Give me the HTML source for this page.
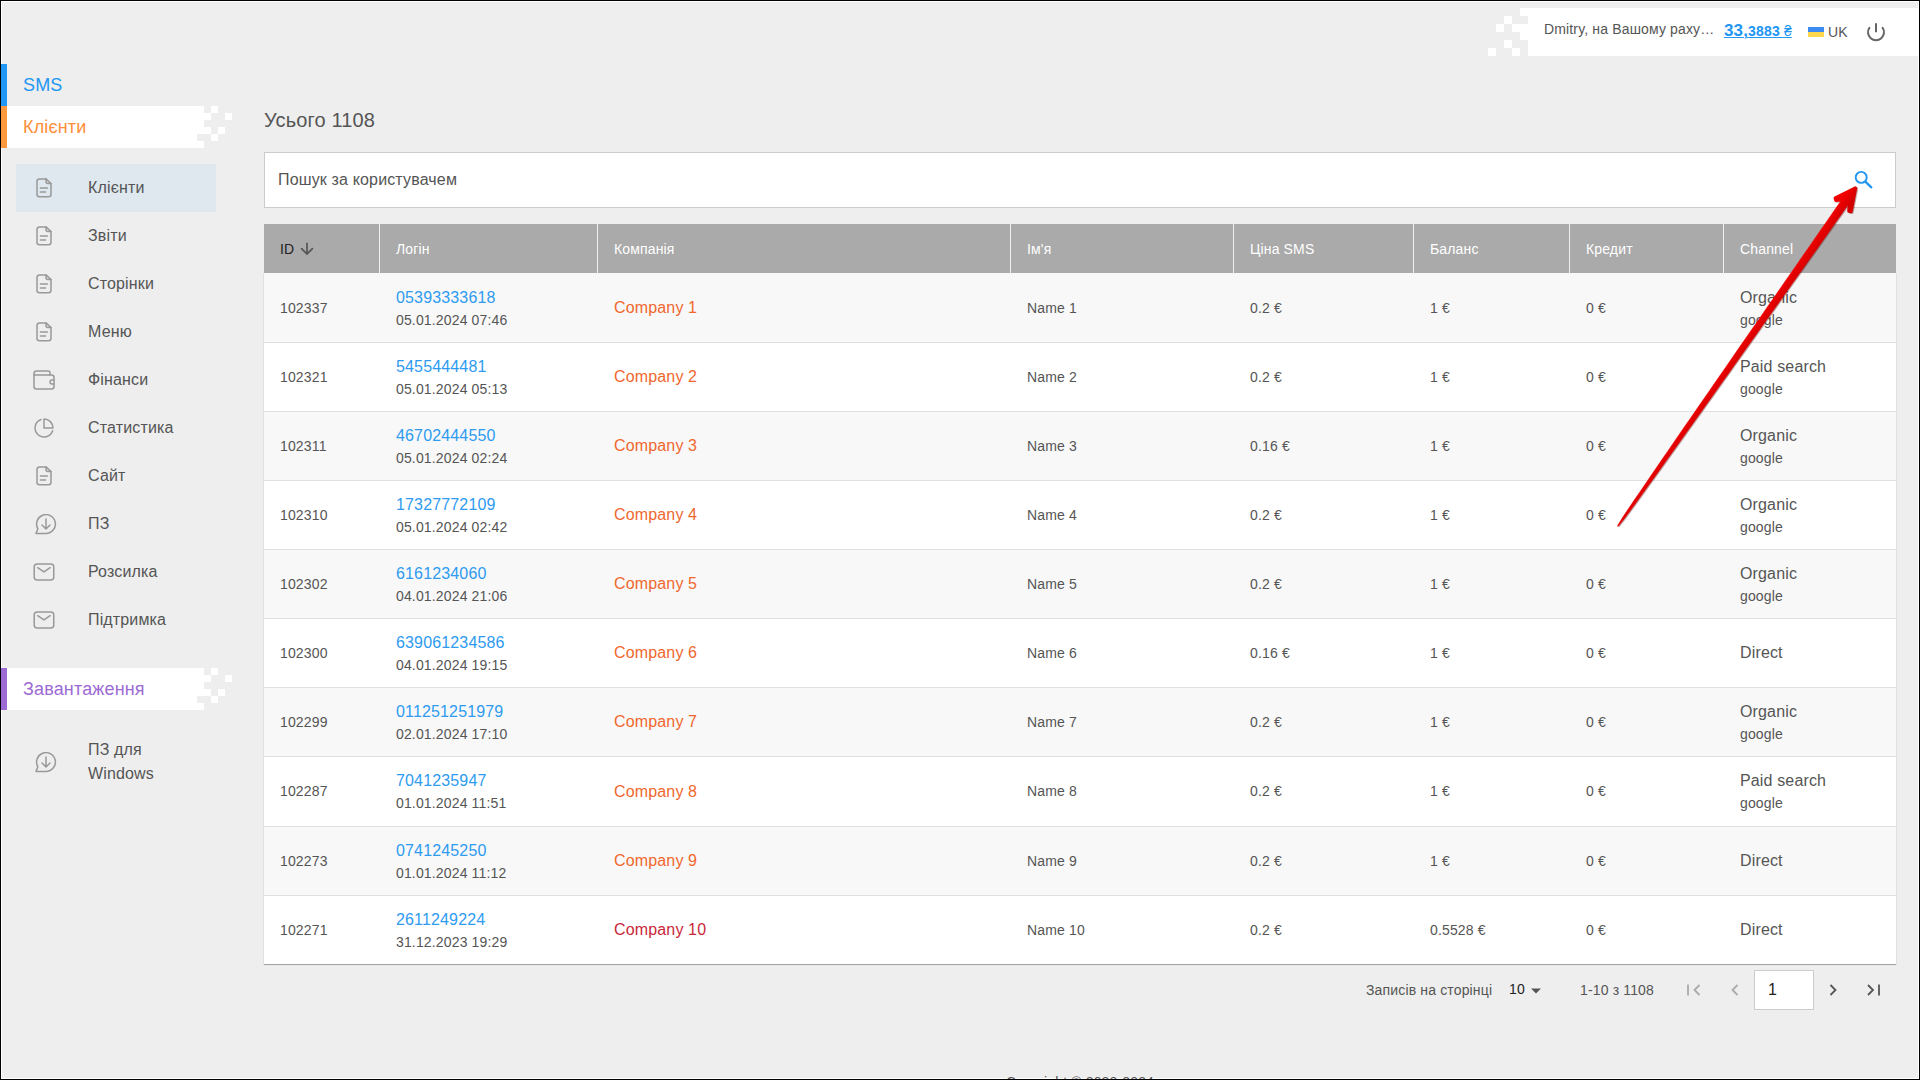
<!DOCTYPE html>
<html lang="uk">
<head>
<meta charset="utf-8">
<title>Клієнти</title>
<style>
*{box-sizing:border-box;margin:0;padding:0}
html,body{width:1920px;height:1080px;overflow:hidden}
body{background:#eeeeee;font-family:"Liberation Sans",sans-serif;color:#555;position:relative;letter-spacing:0.15px}
.abs{position:absolute}
.frame-w{position:absolute;left:1px;top:1px;width:1918px;height:1078px;border:1px solid #fff;z-index:0}
.frame-b{position:absolute;left:0;top:0;width:1920px;height:1080px;border:1px solid #000;z-index:100;pointer-events:none}
/* top bar */
.topbar{position:absolute;left:1480px;top:8px;width:439px;height:48px;z-index:2}
.topbar .panel{position:absolute;left:48px;top:0;right:0;height:48px;background:#fff}
.topbar .txt{position:absolute;left:64px;top:-3px;height:48px;line-height:48px;font-size:14px;color:#555;white-space:nowrap}
/* sidebar */
.sec{position:absolute;left:1px;width:240px;height:42px;z-index:2}
.sec .bar{position:absolute;left:0;top:0;width:6px;height:42px}
.sec .lbl{position:absolute;left:22px;top:0;line-height:42px;font-size:18px;white-space:nowrap}
.sec svg{position:absolute;left:6px;top:0}
.nav{position:absolute;left:16px;width:200px;height:48px;z-index:2}
.nav.on{background:#dee8ee}
.nav .t{position:absolute;left:72px;top:0;line-height:48px;font-size:16px;color:#555;white-space:nowrap}
.nav svg{position:absolute;fill:none;stroke:#999;stroke-width:1.5;stroke-linecap:round;stroke-linejoin:round}
/* main */
.title{position:absolute;left:264px;top:106px;font-size:20px;line-height:28px;color:#555}
.search{position:absolute;left:264px;top:152px;width:1632px;height:56px;background:#fff;border:1px solid #ccc}
.search .ph{position:absolute;left:13px;top:0;line-height:54px;font-size:16px;color:#555}

.tbl{position:absolute;left:264px;top:224px;width:1632px;height:740px;z-index:2}
.thead{position:absolute;left:0;top:0;width:1632px;height:49px;background:#aaa}
.th{position:absolute;top:1px;height:49px;line-height:49px;padding-left:16px;font-size:14px;color:#fff;white-space:nowrap}
.sep{position:absolute;top:0;width:1px;height:49px;background:#efefef}
.tbody{position:absolute;left:0;top:49px;width:1632px;height:692px;box-shadow:-1px 0 0 #e0e0e0,1px 0 0 #e0e0e0,0 1px 0 #e8e8e8}
.row{position:absolute;left:0;width:1632px;background:#fff;border-bottom:1px solid #e0e0e0}
.row.odd{background:#f8f8f8}
.row .cell{top:0}
.row.first .cell{top:1px}
.row.last{border-bottom:1px solid #a3a3a3}
.cell{position:absolute;top:1px;height:100%;padding-left:16px;display:flex;align-items:center}
.c1{font-size:14px;line-height:21px;color:#555;white-space:nowrap}
.c1.big{font-size:16px;line-height:24px}
.comp{color:#f0672e}
.comp.red{color:#c8283a}
.c2 .l1{font-size:16px;line-height:24px;color:#555;white-space:nowrap}
.c2 .l2{font-size:14px;line-height:21px;color:#555;white-space:nowrap}
.lnk{color:#2e9bf0 !important}

.bal{position:absolute;left:1724px;top:0;height:48px;color:#2196f3;white-space:nowrap;font-weight:bold;text-decoration:underline;text-underline-offset:2px}
.flag{position:absolute;left:1807px;top:26px;width:16px;height:11px}
.uk{position:absolute;left:1828px;top:0;line-height:48px;font-size:14px;color:#555}
.pager{position:absolute;left:0;top:0;z-index:2}
.pg-t{position:absolute;font-size:14px;line-height:20px;color:#555;white-space:nowrap}
.pgbox{position:absolute;left:1754px;top:970px;width:60px;height:40px;background:#fff;border:1px solid #ccc}
.copy{position:absolute;left:0;width:2160px;top:1072px;text-align:center;font-size:14px;line-height:20px;color:#555;z-index:2}
.arrow{position:absolute;left:0;top:0;z-index:50;pointer-events:none}
</style>
</head>
<body>
<div class="frame-w"></div>

<!-- TOP BAR -->
<div class="topbar">
  <svg class="abs" style="left:0;top:0" width="48" height="48" viewBox="0 0 48 48" shape-rendering="crispEdges">
    <rect x="40" y="0" width="8" height="8" fill="#fff"/>
    <rect x="24" y="8" width="8" height="8" fill="#fff"/>
    <rect x="16" y="16" width="8" height="8" fill="#fff"/>
    <rect x="32" y="16" width="16" height="8" fill="#fff"/>
    <rect x="40" y="24" width="8" height="8" fill="#fff"/>
    <rect x="24" y="32" width="8" height="8" fill="#fff"/>
    <rect x="8" y="40" width="8" height="8" fill="#fff"/>
    <rect x="32" y="40" width="8" height="8" fill="#fff"/>
  </svg>
  <div class="panel"></div>
  <div class="txt">Dmitry, на Вашому раху…</div>
  <div class="bal" style="left:244px;top:-1px;text-decoration:underline;text-decoration-thickness:1px;text-underline-offset:1px"><span style="font-size:17px;line-height:48px">33,</span><span style="font-size:14px;line-height:48px">3883 <span style="font-weight:normal">₴</span></span></div>
  <div class="flag" style="left:328px;top:19px;height:10px"><div style="height:5px;background:#3d8bf0"></div><div style="height:5px;background:#ffd84d"></div></div>
  <div class="uk" style="left:348px">UK</div>
  <svg class="abs" style="left:385px;top:12.5px" width="22" height="22" viewBox="0 0 22 22" fill="none" stroke="#666" stroke-width="2" stroke-linecap="round"><path d="M4.4 6.7A8 8 0 1 0 17.6 6.7"/><path d="M11 2.3V11.2" stroke-linecap="butt"/></svg>
</div>

<!-- SIDEBAR -->
<div class="sec" style="top:64px"><div class="bar" style="background:#2196f3"></div><div class="lbl" style="color:#2196f3">SMS</div></div>
<div class="sec" style="top:106px">
  <svg width="226" height="42" viewBox="0 0 226 42" shape-rendering="crispEdges">
    <path fill="#fff" d="M0 0H197V7H0Z M0 7H204V14H0Z M0 14H197V21H0Z M0 21H204V28H0Z M0 28H190V35H0Z M0 35H197V42H0Z"/>
    <rect x="204" y="0" width="7" height="7" fill="#fff"/>
    <rect x="218" y="7" width="7" height="7" fill="#fff"/>
    <rect x="211" y="21" width="7" height="7" fill="#fff"/>
    <rect x="204" y="28" width="7" height="7" fill="#fff"/>
  </svg>
  <div class="bar" style="background:#ff993d"></div><div class="lbl" style="color:#ff8f3a">Клієнти</div>
</div>

<div class="nav on" style="top:164px"><svg width="16" height="20" viewBox="0 0 16 20" style="left:20px;top:14px"><path d="M3.5 0.9H10L15 5.6V16.3Q15 18.8 12.5 18.8H3.5Q1 18.8 1 16.3V3.4Q1 0.9 3.5 0.9Z"/><path d="M10 0.9V3.6Q10 5.6 12 5.6H15"/><path d="M4.4 10H11.4M4.4 13.9H9.6"/></svg><div class="t">Клієнти</div></div>
<div class="nav" style="top:212px"><svg width="16" height="20" viewBox="0 0 16 20" style="left:20px;top:14px"><path d="M3.5 0.9H10L15 5.6V16.3Q15 18.8 12.5 18.8H3.5Q1 18.8 1 16.3V3.4Q1 0.9 3.5 0.9Z"/><path d="M10 0.9V3.6Q10 5.6 12 5.6H15"/><path d="M4.4 10H11.4M4.4 13.9H9.6"/></svg><div class="t">Звіти</div></div>
<div class="nav" style="top:260px"><svg width="16" height="20" viewBox="0 0 16 20" style="left:20px;top:14px"><path d="M3.5 0.9H10L15 5.6V16.3Q15 18.8 12.5 18.8H3.5Q1 18.8 1 16.3V3.4Q1 0.9 3.5 0.9Z"/><path d="M10 0.9V3.6Q10 5.6 12 5.6H15"/><path d="M4.4 10H11.4M4.4 13.9H9.6"/></svg><div class="t">Сторінки</div></div>
<div class="nav" style="top:308px"><svg width="16" height="20" viewBox="0 0 16 20" style="left:20px;top:14px"><path d="M3.5 0.9H10L15 5.6V16.3Q15 18.8 12.5 18.8H3.5Q1 18.8 1 16.3V3.4Q1 0.9 3.5 0.9Z"/><path d="M10 0.9V3.6Q10 5.6 12 5.6H15"/><path d="M4.4 10H11.4M4.4 13.9H9.6"/></svg><div class="t">Меню</div></div>
<div class="nav" style="top:356px"><svg width="22" height="22" viewBox="0 0 22 22" style="left:17px;top:13px"><path d="M1 6V17.5Q1 20 3.5 20H18.5Q21 20 21 17.5V8.5Q21 6 18.5 6H1"/><path d="M1 6V4.5Q1 2 3.5 2H15Q17 2 17 4V6"/><path d="M21 11H19A2 2 0 0 0 19 15H21"/></svg><div class="t">Фінанси</div></div>
<div class="nav" style="top:404px"><svg width="20" height="20" viewBox="0 0 20 20" style="left:18px;top:14px"><path d="M7 1.5A9 9 0 1 0 18.6 12.7"/><path d="M10 1V10H19A9 9 0 0 0 10 1Z"/></svg><div class="t">Статистика</div></div>
<div class="nav" style="top:452px"><svg width="16" height="20" viewBox="0 0 16 20" style="left:20px;top:14px"><path d="M3.5 0.9H10L15 5.6V16.3Q15 18.8 12.5 18.8H3.5Q1 18.8 1 16.3V3.4Q1 0.9 3.5 0.9Z"/><path d="M10 0.9V3.6Q10 5.6 12 5.6H15"/><path d="M4.4 10H11.4M4.4 13.9H9.6"/></svg><div class="t">Сайт</div></div>
<div class="nav" style="top:500px"><svg width="22" height="22" viewBox="0 0 22 22" style="left:19px;top:14px"><path d="M11 19.4H1L2.9 14.8A9.4 9.4 0 1 1 11 19.4Z"/><path d="M11 5V14.5M7 11L11 15L15 11"/></svg><div class="t">ПЗ</div></div>
<div class="nav" style="top:548px"><svg width="22" height="20" viewBox="0 0 22 20" style="left:17px;top:14px"><rect x="1.2" y="1.9" width="19.55" height="16" rx="3"/><path d="M4.6 5.7L11 9.9L17.1 5.6"/></svg><div class="t">Розсилка</div></div>
<div class="nav" style="top:596px"><svg width="22" height="20" viewBox="0 0 22 20" style="left:17px;top:14px"><rect x="1.2" y="1.9" width="19.55" height="16" rx="3"/><path d="M4.6 5.7L11 9.9L17.1 5.6"/></svg><div class="t">Підтримка</div></div>
<div class="sec" style="top:668px">
  <svg width="226" height="42" viewBox="0 0 226 42" shape-rendering="crispEdges">
    <path fill="#fff" d="M0 0H197V7H0Z M0 7H204V14H0Z M0 14H197V21H0Z M0 21H204V28H0Z M0 28H190V35H0Z M0 35H197V42H0Z"/>
    <rect x="204" y="0" width="7" height="7" fill="#fff"/>
    <rect x="218" y="7" width="7" height="7" fill="#fff"/>
    <rect x="211" y="21" width="7" height="7" fill="#fff"/>
    <rect x="204" y="28" width="7" height="7" fill="#fff"/>
  </svg>
  <div class="bar" style="background:#9c6bd3"></div><div class="lbl" style="color:#9c6bd3">Завантаження</div>
</div>
<div class="nav" style="top:738px;height:48px"><svg width="22" height="22" viewBox="0 0 22 22" style="left:19px;top:14px"><path d="M11 19.4H1L2.9 14.8A9.4 9.4 0 1 1 11 19.4Z"/><path d="M11 5V14.5M7 11L11 15L15 11"/></svg><div class="t" style="line-height:24px">ПЗ для<br>Windows</div></div>

<!-- MAIN -->
<div class="title">Усього 1108</div>
<div class="search"><div class="ph">Пошук за користувачем</div><svg class="abs" style="left:1586px;top:14px" width="24" height="24" viewBox="0 0 24 24" fill="none" stroke="#2196f3" stroke-width="1.9" stroke-linecap="round"><circle cx="10.2" cy="10.4" r="5.5"/><path d="M14.6 14.8L20.3 20.3" stroke-width="2.3"/></svg></div>


<div class="tbl">
 <div class="thead">
  <div class="th" style="left:0;color:#222">ID<svg width="16" height="16" viewBox="0 0 16 16" style="position:absolute;left:35px;top:15px" fill="none" stroke="#555" stroke-width="1.7" stroke-linecap="round"><path d="M8 3.4V14M2.6 8.7L8 14.1L13.4 8.7"/></svg></div>
  <div class="sep" style="left:115px"></div><div class="th" style="left:116px">Логін</div>
  <div class="sep" style="left:333px"></div><div class="th" style="left:334px">Компанія</div>
  <div class="sep" style="left:746px"></div><div class="th" style="left:747px">Ім'я</div>
  <div class="sep" style="left:969px"></div><div class="th" style="left:970px">Ціна SMS</div>
  <div class="sep" style="left:1149px"></div><div class="th" style="left:1150px">Баланс</div>
  <div class="sep" style="left:1305px"></div><div class="th" style="left:1306px">Кредит</div>
  <div class="sep" style="left:1459px"></div><div class="th" style="left:1460px">Channel</div>
 </div>
 <div class="tbody"></div>
 <div class="row odd first" style="top:49px;height:70px">
 <div class="cell" style="left:0;width:115px"><div class="c1">102337</div></div>
 <div class="cell" style="left:116px;width:218px"><div class="c2"><div class="l1 lnk">05393333618</div><div class="l2">05.01.2024 07:46</div></div></div>
 <div class="cell" style="left:334px;width:413px;top:0"><div class="c1 big comp">Company 1</div></div>
 <div class="cell" style="left:747px;width:223px"><div class="c1">Name 1</div></div>
 <div class="cell" style="left:970px;width:180px"><div class="c1">0.2 €</div></div>
 <div class="cell" style="left:1150px;width:156px"><div class="c1">1 €</div></div>
 <div class="cell" style="left:1306px;width:154px"><div class="c1">0 €</div></div>
 <div class="cell" style="left:1460px;width:173px"><div class="c2"><div class="l1">Organic</div><div class="l2">google</div></div></div>
</div>
<div class="row" style="top:119px;height:69px">
 <div class="cell" style="left:0;width:115px"><div class="c1">102321</div></div>
 <div class="cell" style="left:116px;width:218px"><div class="c2"><div class="l1 lnk">5455444481</div><div class="l2">05.01.2024 05:13</div></div></div>
 <div class="cell" style="left:334px;width:413px"><div class="c1 big comp">Company 2</div></div>
 <div class="cell" style="left:747px;width:223px"><div class="c1">Name 2</div></div>
 <div class="cell" style="left:970px;width:180px"><div class="c1">0.2 €</div></div>
 <div class="cell" style="left:1150px;width:156px"><div class="c1">1 €</div></div>
 <div class="cell" style="left:1306px;width:154px"><div class="c1">0 €</div></div>
 <div class="cell" style="left:1460px;width:173px"><div class="c2"><div class="l1">Paid search</div><div class="l2">google</div></div></div>
</div>
<div class="row odd" style="top:188px;height:69px">
 <div class="cell" style="left:0;width:115px"><div class="c1">102311</div></div>
 <div class="cell" style="left:116px;width:218px"><div class="c2"><div class="l1 lnk">46702444550</div><div class="l2">05.01.2024 02:24</div></div></div>
 <div class="cell" style="left:334px;width:413px"><div class="c1 big comp">Company 3</div></div>
 <div class="cell" style="left:747px;width:223px"><div class="c1">Name 3</div></div>
 <div class="cell" style="left:970px;width:180px"><div class="c1">0.16 €</div></div>
 <div class="cell" style="left:1150px;width:156px"><div class="c1">1 €</div></div>
 <div class="cell" style="left:1306px;width:154px"><div class="c1">0 €</div></div>
 <div class="cell" style="left:1460px;width:173px"><div class="c2"><div class="l1">Organic</div><div class="l2">google</div></div></div>
</div>
<div class="row" style="top:257px;height:69px">
 <div class="cell" style="left:0;width:115px"><div class="c1">102310</div></div>
 <div class="cell" style="left:116px;width:218px"><div class="c2"><div class="l1 lnk">17327772109</div><div class="l2">05.01.2024 02:42</div></div></div>
 <div class="cell" style="left:334px;width:413px"><div class="c1 big comp">Company 4</div></div>
 <div class="cell" style="left:747px;width:223px"><div class="c1">Name 4</div></div>
 <div class="cell" style="left:970px;width:180px"><div class="c1">0.2 €</div></div>
 <div class="cell" style="left:1150px;width:156px"><div class="c1">1 €</div></div>
 <div class="cell" style="left:1306px;width:154px"><div class="c1">0 €</div></div>
 <div class="cell" style="left:1460px;width:173px"><div class="c2"><div class="l1">Organic</div><div class="l2">google</div></div></div>
</div>
<div class="row odd" style="top:326px;height:69px">
 <div class="cell" style="left:0;width:115px"><div class="c1">102302</div></div>
 <div class="cell" style="left:116px;width:218px"><div class="c2"><div class="l1 lnk">6161234060</div><div class="l2">04.01.2024 21:06</div></div></div>
 <div class="cell" style="left:334px;width:413px"><div class="c1 big comp">Company 5</div></div>
 <div class="cell" style="left:747px;width:223px"><div class="c1">Name 5</div></div>
 <div class="cell" style="left:970px;width:180px"><div class="c1">0.2 €</div></div>
 <div class="cell" style="left:1150px;width:156px"><div class="c1">1 €</div></div>
 <div class="cell" style="left:1306px;width:154px"><div class="c1">0 €</div></div>
 <div class="cell" style="left:1460px;width:173px"><div class="c2"><div class="l1">Organic</div><div class="l2">google</div></div></div>
</div>
<div class="row" style="top:395px;height:69px">
 <div class="cell" style="left:0;width:115px"><div class="c1">102300</div></div>
 <div class="cell" style="left:116px;width:218px"><div class="c2"><div class="l1 lnk">639061234586</div><div class="l2">04.01.2024 19:15</div></div></div>
 <div class="cell" style="left:334px;width:413px"><div class="c1 big comp">Company 6</div></div>
 <div class="cell" style="left:747px;width:223px"><div class="c1">Name 6</div></div>
 <div class="cell" style="left:970px;width:180px"><div class="c1">0.16 €</div></div>
 <div class="cell" style="left:1150px;width:156px"><div class="c1">1 €</div></div>
 <div class="cell" style="left:1306px;width:154px"><div class="c1">0 €</div></div>
 <div class="cell" style="left:1460px;width:173px"><div class="c1 big">Direct</div></div>
</div>
<div class="row odd" style="top:464px;height:69px">
 <div class="cell" style="left:0;width:115px"><div class="c1">102299</div></div>
 <div class="cell" style="left:116px;width:218px"><div class="c2"><div class="l1 lnk">011251251979</div><div class="l2">02.01.2024 17:10</div></div></div>
 <div class="cell" style="left:334px;width:413px"><div class="c1 big comp">Company 7</div></div>
 <div class="cell" style="left:747px;width:223px"><div class="c1">Name 7</div></div>
 <div class="cell" style="left:970px;width:180px"><div class="c1">0.2 €</div></div>
 <div class="cell" style="left:1150px;width:156px"><div class="c1">1 €</div></div>
 <div class="cell" style="left:1306px;width:154px"><div class="c1">0 €</div></div>
 <div class="cell" style="left:1460px;width:173px"><div class="c2"><div class="l1">Organic</div><div class="l2">google</div></div></div>
</div>
<div class="row" style="top:533px;height:70px">
 <div class="cell" style="left:0;width:115px"><div class="c1">102287</div></div>
 <div class="cell" style="left:116px;width:218px"><div class="c2"><div class="l1 lnk">7041235947</div><div class="l2">01.01.2024 11:51</div></div></div>
 <div class="cell" style="left:334px;width:413px"><div class="c1 big comp">Company 8</div></div>
 <div class="cell" style="left:747px;width:223px"><div class="c1">Name 8</div></div>
 <div class="cell" style="left:970px;width:180px"><div class="c1">0.2 €</div></div>
 <div class="cell" style="left:1150px;width:156px"><div class="c1">1 €</div></div>
 <div class="cell" style="left:1306px;width:154px"><div class="c1">0 €</div></div>
 <div class="cell" style="left:1460px;width:173px"><div class="c2"><div class="l1">Paid search</div><div class="l2">google</div></div></div>
</div>
<div class="row odd" style="top:603px;height:69px">
 <div class="cell" style="left:0;width:115px"><div class="c1">102273</div></div>
 <div class="cell" style="left:116px;width:218px"><div class="c2"><div class="l1 lnk">0741245250</div><div class="l2">01.01.2024 11:12</div></div></div>
 <div class="cell" style="left:334px;width:413px"><div class="c1 big comp">Company 9</div></div>
 <div class="cell" style="left:747px;width:223px"><div class="c1">Name 9</div></div>
 <div class="cell" style="left:970px;width:180px"><div class="c1">0.2 €</div></div>
 <div class="cell" style="left:1150px;width:156px"><div class="c1">1 €</div></div>
 <div class="cell" style="left:1306px;width:154px"><div class="c1">0 €</div></div>
 <div class="cell" style="left:1460px;width:173px"><div class="c1 big">Direct</div></div>
</div>
<div class="row last" style="top:672px;height:69px">
 <div class="cell" style="left:0;width:115px"><div class="c1">102271</div></div>
 <div class="cell" style="left:116px;width:218px"><div class="c2"><div class="l1 lnk">2611249224</div><div class="l2">31.12.2023 19:29</div></div></div>
 <div class="cell" style="left:334px;width:413px"><div class="c1 big comp red">Company 10</div></div>
 <div class="cell" style="left:747px;width:223px"><div class="c1">Name 10</div></div>
 <div class="cell" style="left:970px;width:180px"><div class="c1">0.2 €</div></div>
 <div class="cell" style="left:1150px;width:156px"><div class="c1">0.5528 €</div></div>
 <div class="cell" style="left:1306px;width:154px"><div class="c1">0 €</div></div>
 <div class="cell" style="left:1460px;width:173px"><div class="c1 big">Direct</div></div>
</div>
</div>


<div class="pager">
 <div class="pg-t" style="left:1366px;top:980px">Записів на сторінці</div>
 <div class="pg-t" style="left:1509px;top:979px;color:#222">10</div>
 <svg class="abs" style="left:1529px;top:987px" width="14" height="8" viewBox="0 0 14 8"><path d="M2 1.5H12L7 6.5Z" fill="#555"/></svg>
 <div class="pg-t" style="left:1580px;top:980px">1-10 з 1108</div>
 <svg class="abs" style="left:1682px;top:978px" width="24" height="24" viewBox="0 0 24 24" fill="none" stroke="#aaa" stroke-width="1.8"><path d="M6 6.5V17.5"/><path d="M17.5 7L12.5 12L17.5 17"/></svg>
 <svg class="abs" style="left:1722px;top:978px" width="24" height="24" viewBox="0 0 24 24" fill="none" stroke="#aaa" stroke-width="1.8"><path d="M15.5 7L10.5 12L15.5 17"/></svg>
 <div class="pgbox"><div class="pg-t" style="left:13px;top:9px;color:#222;font-size:16px">1</div></div>
 <svg class="abs" style="left:1822px;top:978px" width="24" height="24" viewBox="0 0 24 24" fill="none" stroke="#555" stroke-width="1.8"><path d="M8.5 7L13.5 12L8.5 17"/></svg>
 <svg class="abs" style="left:1862px;top:978px" width="24" height="24" viewBox="0 0 24 24" fill="none" stroke="#555" stroke-width="1.8"><path d="M6 7L11 12L6 17"/><path d="M17 6.5V17.5"/></svg>
</div>
<div class="copy">Copyright © 2020-2024</div>
<svg class="arrow" width="1920" height="1080" viewBox="0 0 1920 1080">
 <defs><linearGradient id="ag" gradientUnits="userSpaceOnUse" x1="1851.51" y1="184.23" x2="1859.69" y2="189.97"><stop offset="0" stop-color="#f20000"/><stop offset="1" stop-color="#d40000"/></linearGradient><filter id="sh" x="-10%" y="-10%" width="120%" height="120%"><feGaussianBlur stdDeviation="0.6"/></filter></defs>
 <g transform="translate(1 0.8)" opacity="0.35" filter="url(#sh)"><path d="M1855.49 188.12 L1835.36 198.19 L1835.95 200.31 L1843.15 199.62 L1849.57 201.44 L1848.96 211.02 L1850.92 211.54 Z" fill="#500" stroke="#500" stroke-width="3.5" stroke-linejoin="round"/><path d="M1617.66 526.39 L1617.51 525.56 L1622.75 517.10 L1628.26 508.83 L1633.82 500.60 L1639.40 492.38 L1644.99 484.17 L1650.59 475.97 L1656.21 467.77 L1661.82 459.58 L1667.45 451.39 L1673.08 443.21 L1678.71 435.02 L1684.34 426.84 L1689.98 418.67 L1695.62 410.49 L1701.26 402.31 L1706.91 394.14 L1712.55 385.97 L1718.20 377.80 L1723.85 369.63 L1729.50 361.46 L1735.15 353.29 L1740.81 345.12 L1746.46 336.96 L1752.12 328.79 L1757.77 320.63 L1763.43 312.46 L1769.09 304.30 L1774.75 296.13 L1780.41 287.97 L1786.07 279.81 L1791.73 271.65 L1797.39 263.49 L1803.05 255.33 L1808.72 247.16 L1814.38 239.01 L1820.04 230.85 L1825.71 222.69 L1831.37 214.53 L1837.04 206.37 L1842.71 198.21 L1849.55 203.01 L1843.81 211.11 L1838.07 219.22 L1832.32 227.33 L1826.58 235.43 L1820.84 243.54 L1815.10 251.64 L1809.35 259.74 L1803.61 267.85 L1797.87 275.95 L1792.12 284.05 L1786.38 292.16 L1780.63 300.26 L1774.88 308.36 L1769.13 316.46 L1763.38 324.56 L1757.64 332.66 L1751.88 340.76 L1746.13 348.86 L1740.38 356.95 L1734.62 365.05 L1728.87 373.15 L1723.11 381.24 L1717.35 389.33 L1711.59 397.43 L1705.83 405.52 L1700.07 413.61 L1694.30 421.70 L1688.53 429.78 L1682.76 437.87 L1676.99 445.95 L1671.21 454.03 L1665.43 462.10 L1659.64 470.18 L1653.84 478.25 L1648.04 486.31 L1642.23 494.36 L1636.40 502.41 L1630.55 510.44 L1624.66 518.44 L1618.49 526.24 Z" fill="#500"/></g>
 <path d="M1617.66 526.39 L1617.51 525.56 L1622.75 517.10 L1628.26 508.83 L1633.82 500.60 L1639.40 492.38 L1644.99 484.17 L1650.59 475.97 L1656.21 467.77 L1661.82 459.58 L1667.45 451.39 L1673.08 443.21 L1678.71 435.02 L1684.34 426.84 L1689.98 418.67 L1695.62 410.49 L1701.26 402.31 L1706.91 394.14 L1712.55 385.97 L1718.20 377.80 L1723.85 369.63 L1729.50 361.46 L1735.15 353.29 L1740.81 345.12 L1746.46 336.96 L1752.12 328.79 L1757.77 320.63 L1763.43 312.46 L1769.09 304.30 L1774.75 296.13 L1780.41 287.97 L1786.07 279.81 L1791.73 271.65 L1797.39 263.49 L1803.05 255.33 L1808.72 247.16 L1814.38 239.01 L1820.04 230.85 L1825.71 222.69 L1831.37 214.53 L1837.04 206.37 L1842.71 198.21 L1849.55 203.01 L1843.81 211.11 L1838.07 219.22 L1832.32 227.33 L1826.58 235.43 L1820.84 243.54 L1815.10 251.64 L1809.35 259.74 L1803.61 267.85 L1797.87 275.95 L1792.12 284.05 L1786.38 292.16 L1780.63 300.26 L1774.88 308.36 L1769.13 316.46 L1763.38 324.56 L1757.64 332.66 L1751.88 340.76 L1746.13 348.86 L1740.38 356.95 L1734.62 365.05 L1728.87 373.15 L1723.11 381.24 L1717.35 389.33 L1711.59 397.43 L1705.83 405.52 L1700.07 413.61 L1694.30 421.70 L1688.53 429.78 L1682.76 437.87 L1676.99 445.95 L1671.21 454.03 L1665.43 462.10 L1659.64 470.18 L1653.84 478.25 L1648.04 486.31 L1642.23 494.36 L1636.40 502.41 L1630.55 510.44 L1624.66 518.44 L1618.49 526.24 Z" fill="url(#ag)" stroke="url(#ag)" stroke-width="0.3"/>
 <path d="M1855.49 188.12 L1835.36 198.19 L1835.95 200.31 L1843.15 199.62 L1849.57 201.44 L1848.96 211.02 L1850.92 211.54 Z" fill="url(#ag)" stroke="url(#ag)" stroke-width="3.5" stroke-linejoin="round"/>
</svg>

<div class="frame-b"></div>
</body>
</html>
